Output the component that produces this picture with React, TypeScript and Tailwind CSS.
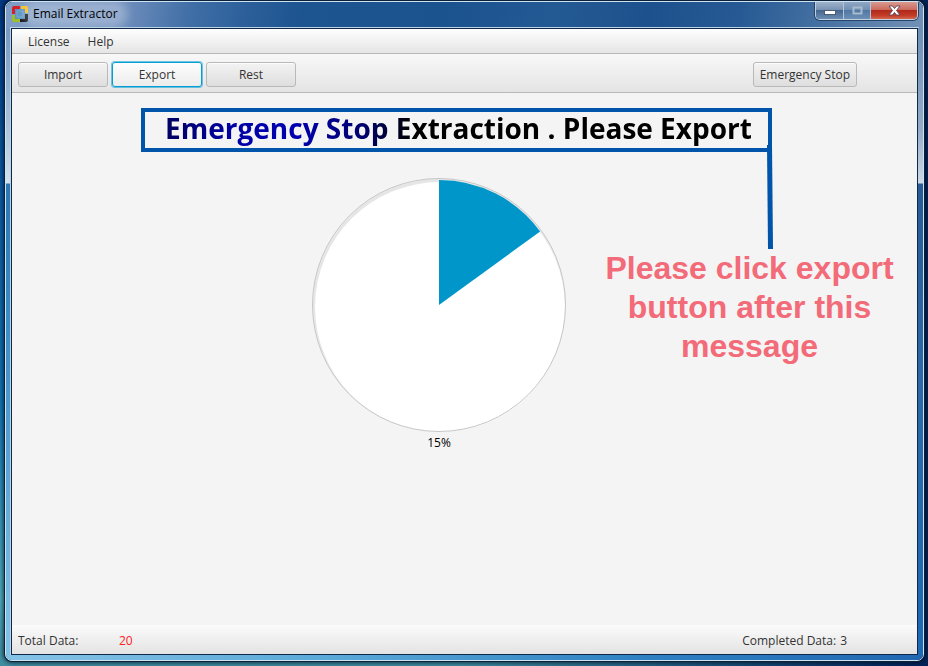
import type { ReactNode } from "react";

const PERCENT = 15;

function AppLogo() {
  return (
    <svg width="16" height="16" viewBox="0 0 16 16" aria-hidden="true">
      <path d="M0 8V2a2 2 0 0 1 2-2h6v4H4v4z" fill="#d3202a" />
      <path d="M9 0h5a2 2 0 0 1 2 2v5h-4V4H9z" fill="#f2bf1c" />
      <path d="M0 9h4v3h4v4H2a2 2 0 0 1-2-2z" fill="#9dbf25" />
      <path d="M12 8h4v6a2 2 0 0 1-2 2H8v-4h4z" fill="#16161c" />
      <rect x="3" y="3" width="10" height="10" fill="#5b93c4" />
      <path d="M5 5h6v6H5z" fill="none" stroke="#76a9d2" />
    </svg>
  );
}

function TitleBar() {
  return (
    <header className="flex h-[26px] shrink-0 items-start justify-between bg-[linear-gradient(100deg,#7f9dc5_0%,#7492bf_12%,#416fa6_20%,#2d609b_26%,#1d5590_32%,#1b538f_48%,#245a94_60%,#1d518d_70%,#275a94_80%,#4a74a4_90%,#7391b6_100%)] pl-1.5">
      <div className="flex h-[26px] items-center gap-px pb-0.5">
        <AppLogo />
        <h1 className="rounded-full bg-white/25 px-1 text-[12px] leading-4 text-black shadow-[0_0_8px_6px_rgba(255,255,255,0.25)]">
          Email Extractor
        </h1>
      </div>
      <div className="mr-[5px] flex h-[18px] overflow-hidden rounded-b-[5px] border border-t-0 border-[#c3d0e0] shadow-[0_0_0_1px_#24446c]">
        <button
          aria-label="Minimize"
          className="flex w-7 items-center justify-center border-r border-[#b4c5d9] bg-[linear-gradient(#9fb3cb_0%,#7993b2_45%,#45678f_50%,#6c8db1_100%)]"
        >
          <svg width="12" height="5" viewBox="0 0 12 5" className="mt-1">
            <rect x="0.5" y="0.5" width="11" height="4" fill="#fff" stroke="#4b5c73" />
          </svg>
        </button>
        <button
          aria-label="Maximize"
          disabled
          className="flex w-[27px] items-center justify-center border-r border-[#b4c5d9] bg-[linear-gradient(#8fa7c4_0%,#7290b3_45%,#5078a4_50%,#6c8fb6_100%)]"
        >
          <svg width="11" height="9" viewBox="0 0 11 9">
            <rect x="1.5" y="1.5" width="8" height="6" fill="none" stroke="#a9bace" strokeWidth="2" />
          </svg>
        </button>
        <button
          aria-label="Close"
          className="flex w-[46px] items-center justify-center bg-[linear-gradient(#d99a90_0%,#cb6b5d_45%,#b02a1b_50%,#c43c28_80%,#d2694f_100%)]"
        >
          <svg width="13" height="11" viewBox="0 0 13 11">
            <path d="M1 1h3.500l2 2.500L8.500 1H12L8.500 5.500 12 10H8.500l-2-2.500-2 2.500H1l3.500-4.500z" fill="#fff" stroke="#5a4658" strokeWidth="0.900" />
          </svg>
        </button>
      </div>
    </header>
  );
}

function ToolButton({ children, focused = false, compact = false }: { children: ReactNode; focused?: boolean; compact?: boolean }) {
  return (
    <button
      className={`h-[25px] rounded-[3px] border text-[12px] leading-4 text-[#333] ${compact ? "px-1.5" : "w-[90px]"} ${
        focused
          ? "border-[#039ed3] bg-[linear-gradient(#fdfdfd,#ececec)] shadow-[0_0_0_1px_rgba(3,158,211,0.55)]"
          : "border-[#b9b9b9] bg-[linear-gradient(#f3f3f3,#dedede)] shadow-[inset_0_1px_0_#fcfcfc]"
      }`}
    >
      {children}
    </button>
  );
}

function ProgressPie({ percent }: { percent: number }) {
  const angle = (percent / 100) * 2 * Math.PI;
  const r = 125;
  const x = 127 + r * Math.sin(angle);
  const y = 127 - r * Math.cos(angle);
  return (
    <figure className="flex flex-col items-center">
      <svg viewBox="0 0 254 254" className="h-[254px] w-[254px]" role="img" aria-label="Extraction progress">
        <circle cx="127" cy="127" r="126" fill="#e6e6e6" />
        <circle cx="128" cy="129" r="125" fill="#fff" />
        <circle cx="127" cy="127" r="126.500" fill="none" stroke="#c6c6c6" />
        <path d={`M127 127V2A${r} ${r} 0 0 1 ${x} ${y}z`} fill="#0096c9" />
      </svg>
      <figcaption className="mt-[3px] text-[12px] leading-4 text-black">{percent}%</figcaption>
    </figure>
  );
}

export default function App() {
  return (
    <div className="flex min-h-screen flex-col bg-[linear-gradient(90deg,transparent_50%,#00245a_99%),linear-gradient(#003a85_0%,#0c5fa9_30%,#0f77b5_60%,#4fb0bd_90%,#3f8ea0_100%)] pt-px pr-1 pb-[5px] pl-[5px] font-['Open_Sans','Noto_Sans',sans-serif]">
      <div className="flex grow flex-col overflow-hidden rounded-[7px] border border-[#cfe2f2] shadow-[0_0_0_1px_#0b2138,0_0_4px_2px_rgba(0,10,30,0.7)]">
        <TitleBar />
        <div className="flex grow">
          <div className="w-[5px] shrink-0 bg-[linear-gradient(#7898c2_0px,#a9c4dc_100px,#d2e2ee_155px,#2a78b4_156px,#3c8ec6_300px,#7fc0e4_600px)]" />
          <div className="flex min-w-0 grow flex-col border border-[#10284a] bg-[#f4f4f4] shadow-[0_0_0_1px_#bdd3e6]">
            <nav className="flex h-[25px] shrink-0 items-center gap-[18px] border-b border-[#b8b8b8] bg-[linear-gradient(#fefefe,#e5e5e5)] px-4 pt-0.5 text-[12px] leading-4 text-[#333]">
              <button>License</button>
              <button>Help</button>
            </nav>
            <div className="flex h-[39px] shrink-0 items-center justify-between border-b border-[#b8b8b8] bg-[linear-gradient(#f8f8f8,#e4e4e4)] pt-[3px] pr-[60px] pl-1.5">
              <div className="flex gap-1">
                <ToolButton>Import</ToolButton>
                <ToolButton focused>Export</ToolButton>
                <ToolButton>Rest</ToolButton>
              </div>
              <ToolButton compact>Emergency Stop</ToolButton>
            </div>
            <main className="flex grow flex-col pt-[15px]">
              <div className="flex justify-center pr-4">
                <div className="relative flex h-11 w-[631px] justify-center border-4 border-[#0054a9] pl-1">
                  <h2 className="bg-[linear-gradient(90deg,#000060_0%,#0000a8_12%,#0000b0_22%,#00006c_34%,#000_42%)] bg-clip-text text-[28px] leading-8 font-bold whitespace-nowrap text-transparent">
                    Emergency Stop Extraction . Please Export
                  </h2>
                  <svg width="7" height="104" viewBox="0 0 7 104" className="absolute top-[33px] -right-[5px]" aria-hidden="true">
                    <path d="M1 0h5l1 104h-5z" fill="#0054a9" />
                  </svg>
                </div>
              </div>
              <div className="grid grid-cols-[300fr_254px_351fr] pt-[26px]">
                <div className="col-start-2">
                  <ProgressPie percent={PERCENT} />
                </div>
                <p className="pt-[71px] pl-4 text-center font-['Liberation_Sans',sans-serif] text-[32px] leading-[39px] font-bold text-[#f36a78]">
                  Please click export
                  <br />
                  button after this
                  <br />
                  message
                </p>
              </div>
            </main>
            <footer className="flex h-[29px] shrink-0 items-center justify-between bg-[linear-gradient(#fbfbfb,#e3e3e3)] pt-0.5 pr-[70px] pl-1.5 text-[12px] leading-4 text-[#333]">
              <div className="flex">
                <span className="w-[101px]">Total Data:</span>
                <span className="text-[#ff2020]">20</span>
              </div>
              <div className="flex gap-1">
                <span>Completed Data:</span>
                <span>3</span>
              </div>
            </footer>
          </div>
          <div className="w-[5px] shrink-0 bg-[linear-gradient(#6f8fb6_0px,#93abc8_100px,#cddae6_155px,#285b94_156px,#2c69a8_350px,#1e69b4_600px)]" />
        </div>
        <div className="h-[5px] shrink-0 bg-[linear-gradient(90deg,#86c3e6_0%,#5aa9d8_35%,#2f80c2_70%,#2068b2_100%)]" />
      </div>
    </div>
  );
}
